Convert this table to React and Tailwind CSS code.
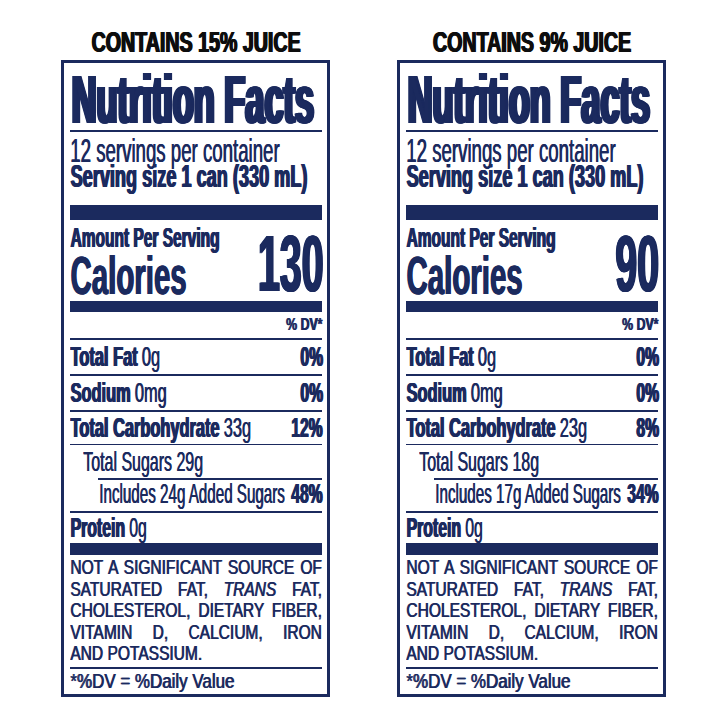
const labels = [
  { juice: "15%", calories: "130", carb: "33g", carbDv: "12%", sugars: "29g", added: "24g", addedDv: "48%" },
  { juice: "9%", calories: "90", carb: "23g", carbDv: "8%", sugars: "18g", added: "17g", addedDv: "34%" },
];

// Liberation Sans squeezed sideways stands in for Helvetica Condensed;
// the sideways text-shadow thickens the stems the squeeze takes away.
const thin = "[text-shadow:1px_0_0_currentColor]";
const bold = "font-bold [text-shadow:1px_0_0_currentColor,2px_0_0_currentColor]";
const heavy =
  "font-bold [text-shadow:1px_0_0_currentColor,2px_0_0_currentColor,3px_0_0_currentColor,4px_0_0_currentColor]";
const black =
  "font-bold [text-shadow:1px_0_0_currentColor,2px_0_0_currentColor,3px_0_0_currentColor,4px_0_0_currentColor,5px_0_0_currentColor,6px_0_0_currentColor,7px_0_0_currentColor]";

const Rule = ({ className }) => <div className={`bg-[#1b2a5e] ${className}`} />;

const Nutrient = ({ className, textScale, dv, children }) => (
  <div className={`flex text-[28px] ${className}`}>
    <div className="flex-1 min-w-0">
      <span className={`inline-block align-top whitespace-nowrap origin-left ${textScale}`}>{children}</span>
    </div>
    {dv && (
      <div className="shrink-0">
        <span className={`inline-block align-top whitespace-nowrap origin-right scale-x-[0.56] ${bold}`}>
          {dv}
        </span>
      </div>
    )}
  </div>
);

const Line = ({ last, children }) => (
  <div
    className={`w-[340px] origin-left scale-x-[0.74] whitespace-nowrap ${thin} ${
      last ? "" : "text-justify [text-align-last:justify]"
    }`}
  >
    {children}
  </div>
);

const Label = ({ item }) => (
  <div className="w-[269px] flex flex-col">
    <div className="h-[60px] pt-[25px] flex justify-center text-[29px] leading-[35px] text-[#0d0d0d]">
      <span className={`inline-block shrink-0 whitespace-nowrap origin-center scale-x-[0.677] ${bold}`}>
        CONTAINS {item.juice} JUICE
      </span>
    </div>
    <div className="h-[637px] border-[3px] border-[#1b2a5e] pl-[6px] pr-[5px] text-[#1b2a5e] flex flex-col">
      <div className="pt-[6px] text-[68px] leading-[60px]">
        <span className={`inline-block align-top whitespace-nowrap origin-left scale-x-[0.505] ${black}`}>
          Nutrition Facts
        </span>
      </div>
      <Rule className="mt-[1px] h-[2px]" />
      <div className="mt-[6px] text-[33px] leading-[26px]">
        <span className={`inline-block align-top whitespace-nowrap origin-left scale-x-[0.565] ${thin}`}>
          12 servings per container
        </span>
      </div>
      <div className="text-[31px] leading-[26px]">
        <span className={`inline-block align-top whitespace-nowrap origin-left scale-x-[0.585] ${bold}`}>
          Serving size 1 can (330 mL)
        </span>
      </div>
      <Rule className="mt-[15px] h-[15px]" />
      <div className="flex h-[81px]">
        <div className="flex-1 min-w-0 pt-[6px]">
          <div className="text-[27px] leading-[24px]">
            <span className={`inline-block align-top whitespace-nowrap origin-left scale-x-[0.574] ${bold}`}>
              Amount Per Serving
            </span>
          </div>
          <div className="text-[54px] leading-[51px]">
            <span className={`inline-block align-top whitespace-nowrap origin-left scale-x-[0.545] ${bold}`}>
              Calories
            </span>
          </div>
        </div>
        <div className="shrink-0 pt-[7px] text-[80px] leading-[74px]">
          <span className={`inline-block align-top whitespace-nowrap origin-right scale-x-[0.49] ${heavy}`}>
            {item.calories}
          </span>
        </div>
      </div>
      <Rule className="h-[11px]" />
      <div className="text-right text-[16px] leading-[26px]">
        <span className={`inline-block align-top whitespace-nowrap origin-right scale-x-[0.77] ${thin} font-bold`}>
          % DV*
        </span>
      </div>
      <Rule className="h-[2px]" />
      <Nutrient className="leading-[34px]" textScale="scale-x-[0.585]" dv="0%">
        <span className={bold}>Total Fat</span>
        <span className={thin}> 0g</span>
      </Nutrient>
      <Rule className="h-[2px]" />
      <Nutrient className="leading-[34px]" textScale="scale-x-[0.585]" dv="0%">
        <span className={bold}>Sodium</span>
        <span className={thin}> 0mg</span>
      </Nutrient>
      <Rule className="h-[2px]" />
      <Nutrient className="leading-[32px]" textScale="scale-x-[0.585]" dv={item.carbDv}>
        <span className={bold}>Total Carbohydrate</span>
        <span className={thin}> {item.carb}</span>
      </Nutrient>
      <Rule className="h-[1px]" />
      <Nutrient className="pl-[13px] leading-[33px]" textScale="scale-x-[0.57]">
        <span className={thin}>Total Sugars {item.sugars}</span>
      </Nutrient>
      <Rule className="ml-[28px] h-[2px]" />
      <Nutrient className="pl-[29px] leading-[28px] pb-[3px]" textScale="scale-x-[0.542]" dv={item.addedDv}>
        <span className={thin}>Includes {item.added} Added Sugars</span>
      </Nutrient>
      <Rule className="h-[2px]" />
      <Nutrient className="leading-[30px]" textScale="scale-x-[0.565]">
        <span className={bold}>Protein</span>
        <span className={thin}> 0g</span>
      </Nutrient>
      <Rule className="h-[12px]" />
      <div className="pt-[1px] text-[21px] leading-[21.5px]">
        <Line>NOT A SIGNIFICANT SOURCE OF</Line>
        <Line>
          SATURATED FAT, <i>TRANS</i> FAT,
        </Line>
        <Line>CHOLESTEROL, DIETARY FIBER,</Line>
        <Line>VITAMIN D, CALCIUM, IRON</Line>
        <Line last>AND POTASSIUM.</Line>
      </div>
      <Rule className="mt-[3px] h-[2px]" />
      <div className="text-[20px] leading-[24px]">
        <span className={`inline-block align-top whitespace-nowrap origin-left scale-x-[0.847] ${thin}`}>
          *%DV = %Daily Value
        </span>
      </div>
    </div>
  </div>
);

export default function App() {
  return (
    <div className="w-[727px] h-[727px] overflow-hidden bg-white flex gap-[67px] pl-[61px] font-['Liberation_Sans',Arial,sans-serif]">
      {labels.map((item) => (
        <Label key={item.juice} item={item} />
      ))}
    </div>
  );
}
